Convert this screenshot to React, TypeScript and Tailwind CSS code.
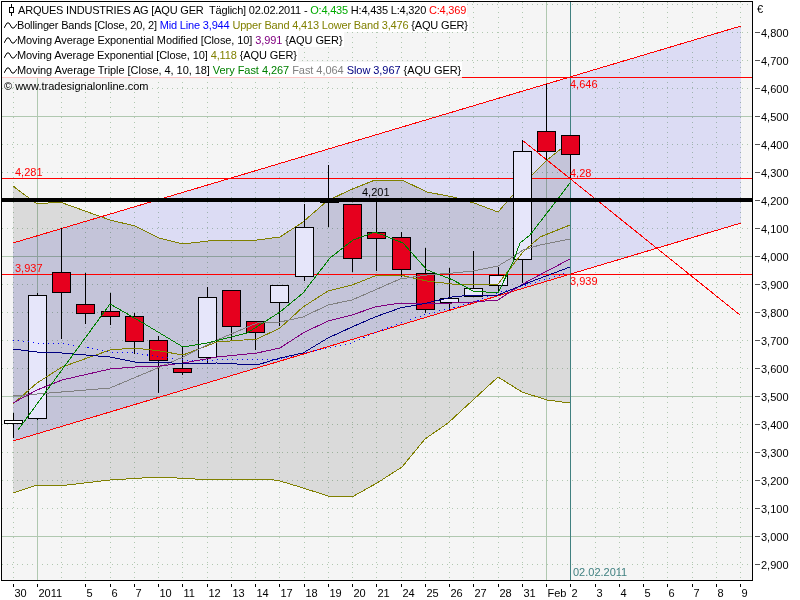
const px = (i: number) => Math.floor(13 + 24.25 * i) + 0.5
const py = (p: number) => Math.floor(32 + (4800 - p) * 0.28) + 0.5

// index, body top, body bottom, wick top, wick bottom, fall
const candles: [number, number, number, number, number, boolean][] = [
  [1, 295, 418, 293, 420, false],
  [2, 272, 292, 228, 339, true],
  [3, 304, 313, 273, 324, true],
  [4, 311, 316, 293, 325, true],
  [5, 316, 341, 313, 354, true],
  [6, 340, 360, 336, 393, true],
  [7, 368, 372, 347, 375, true],
  [8, 297, 357, 287, 363, false],
  [9, 290, 326, 290, 340, true],
  [10, 321, 332, 321, 350, true],
  [11, 285, 302, 285, 326, false],
  [12, 227, 276, 204, 281, false],
  [14, 204, 258, 204, 272, true],
  [15, 232, 238, 202, 271, true],
  [16, 237, 269, 232, 277, true],
  [17, 273, 309, 248, 313, true],
  [18, 298, 302, 268, 310, false],
  [19, 288, 296, 251, 296, false],
  [20, 275, 285, 267, 292, false],
  [21, 151, 259, 140, 283, false],
  [22, 131, 151, 84, 160, true],
  [23, 135, 154, 135, 178, true],
]

const upperBand = '13,186 37,204 60,202 85,211 110,220 135,226 159,238 183,244 217,240 257,240 280,237 303,222 327,201 350,190 375,180 402,180 427,192 453,197 474,203 498,212 513,195 532,175 547,160 562,148 570,143'
const lowerBand = '570,403 547,400 522,392 498,377 473,400 448,423 425,439 402,467 377,483 352,497 328,496 300,487 280,481 267,479 195,479 158,477 110,480 67,485 37,485 13,493'

const maLines = [
  { color: '#808000', points: '13,404 37,383 62,367 110,350 135,348 160,351 183,355 217,342 257,339 280,328 303,307 328,291 352,285 375,276 400,275 427,281 452,284 473,285 498,284 523,252 540,237 570,225' },
  { color: '#808080', points: '13,396 110,388 160,367 183,357 217,340 257,323 280,322 303,317 328,305 352,300 375,290 400,279 427,275 453,273 473,271 498,266 513,257 523,250 540,245 570,239' },
  { color: '#800080', points: '13,403 37,390 62,380 110,369 135,367 160,366 183,363 217,357 257,353 280,348 303,333 328,321 352,315 375,307 400,303 427,304 452,303 473,302 498,300 513,290 530,280 570,259' },
  { color: '#000080', points: '13,349 37,352 62,353 110,357 135,362 160,362 183,364 217,363 257,365 280,358 303,353 328,338 352,327 375,317 400,308 427,303 452,297 473,295 498,295 530,282 570,267' },
  { color: '#008000', points: '18,430 110,304 143,323 183,347 207,343 247,333 280,312 303,293 330,258 353,240 375,232 403,243 427,270 453,280 473,291 498,293 513,262 520,243 530,235 557,200 570,183' },
]

const dayLabels: [number, string][] = [
  [0, '30'], [1, '2011'], [3, '5'], [4, '6'], [5, '7'], [6, '10'], [7, '11'], [8, '12'], [9, '13'], [10, '14'],
  [11, '17'], [12, '18'], [13, '19'], [14, '20'], [15, '21'], [16, '24'], [17, '25'], [18, '26'], [19, '27'],
  [20, '28'], [21, '31'], [22, 'Feb'], [23, '2'], [24, '3'], [25, '4'], [26, '5'], [27, '6'], [28, '7'], [29, '8'], [30, '9'],
]

const priceLevels = Array.from({ length: 20 }, (_, i) => 4800 - i * 100)
const solidLevels = [4500, 4000, 3500, 3000]
const priceLabel = (p: number) => `${Math.floor(p / 1000)},${String(p % 1000).padStart(3, '0')}`

function WaveIcon() {
  return (
    <svg width="13" height="10" viewBox="0 0 13 10" fill="none" className="shrink-0">
      <path d="M0 8L3 3H5L8 8H10L13 4" stroke="#000" strokeWidth="1" />
    </svg>
  )
}

function Chart() {
  return (
    <svg width="800" height="600" viewBox="0 0 800 600" className="block" fontFamily="'Liberation Sans', sans-serif" fontSize="11">
      <rect x="1.5" y="1.5" width="751" height="579" fill="#f5f5f5" />

      {/* Raster */}
      <g shapeRendering="crispEdges" fill="none" stroke="#b0c8b0">
        <line x1="2" x2="752" y1="4.5" y2="4.5" strokeDasharray="1 4" />
        {priceLevels.map(p =>
          solidLevels.includes(p) ? (
            <line key={p} x1="2" x2="752" y1={py(p)} y2={py(p)} />
          ) : (
            <line key={p} x1="2" x2="752" y1={py(p)} y2={py(p)} strokeDasharray="1 4" />
          )
        )}
        {Array.from({ length: 31 }, (_, i) => i).map(i =>
          i === 1 || i === 22 ? (
            <line key={i} x1={px(i)} x2={px(i)} y1="2" y2="580" />
          ) : (
            <line key={i} x1={px(i)} x2={px(i)} y1="2" y2="580" strokeDasharray="1 4" />
          )
        )}
      </g>

      {/* Flaechen */}
      <polygon points={`${upperBand} ${lowerBand}`} fill="#e3e3e3" className="mix-blend-multiply" />
      <polygon points="13,243 741,26 741,223 13,441" fill="#e5e5fe" className="mix-blend-multiply" />

      {/* Zeitlinie */}
      <line x1="570.5" x2="570.5" y1="2" y2="580" stroke="#408080" shapeRendering="crispEdges" />
      <text x="573" y="576" fill="#408080">02.02.2011</text>

      <g fill="none" shapeRendering="crispEdges">
        <polyline points={upperBand} stroke="#808000" />
        <polyline points={lowerBand} stroke="#808000" />
        <line x1="13" y1="243" x2="741" y2="26" stroke="#ff0000" />
        <line x1="13" y1="441" x2="741" y2="223" stroke="#ff0000" />
        <line x1="522" y1="140" x2="740" y2="315" stroke="#ff0000" />
        <line x1="2" x2="752" y1="77.5" y2="77.5" stroke="#ff0000" />
        <line x1="2" x2="752" y1="178.5" y2="178.5" stroke="#ff0000" />
        <line x1="2" x2="752" y1="274.5" y2="274.5" stroke="#ff0000" />
      </g>

      {/* Kerzen */}
      <g shapeRendering="crispEdges" stroke="#000">
        <line x1={px(0)} x2={px(0)} y1="413" y2="438" />
        <rect x="4.5" y="420.5" width="18" height="3" fill="#fff" />
        <line x1={px(13)} x2={px(13)} y1="165" y2="227" />
        <line x1={px(13) - 9} x2={px(13) + 10} y1="202.5" y2="202.5" />
        {candles.map(([i, top, bottom, wickTop, wickBottom, fall]) => (
          <g key={i}>
            <line x1={px(i)} x2={px(i)} y1={wickTop} y2={wickBottom} />
            <rect
              x={px(i) - 9}
              y={top + 0.5}
              width="18"
              height={bottom - top}
              fill={fall ? '#e6001e' : '#e6e6fa'}
            />
          </g>
        ))}
      </g>

      <g fill="none" shapeRendering="crispEdges">
        <polyline
          points="13,340 37,343 67,344 110,352 135,353 160,357 183,360 217,360 280,359 303,353 328,348 352,343 375,333 400,323 427,314 452,308 473,302 498,293 567,273"
          stroke="#0000ff"
          strokeDasharray="1 4"
        />
        {maLines.map(l => (
          <polyline key={l.color} points={l.points} stroke={l.color} />
        ))}
      </g>

      <rect x="2" y="198" width="750" height="4" fill="#000" />

      <g fill="#ff0000">
        <text x="15" y="176">4,281</text>
        <text x="15" y="272">3,937</text>
        <text x="570" y="88">4,646</text>
        <text x="570" y="177">4,28</text>
        <text x="570" y="285">3,939</text>
      </g>
      <text x="362" y="196" fill="#000">4,201</text>

      <rect x="1.5" y="1.5" width="751" height="579" fill="none" stroke="#000" shapeRendering="crispEdges" />

      {/* Achsen */}
      <text x="757" y="13" fill="#000">€</text>
      {priceLevels.map(p => (
        <g key={p}>
          <line x1="755" x2="760" y1={py(p)} y2={py(p)} stroke="#555" shapeRendering="crispEdges" />
          <text x="761" y={py(p) + 4} fill="#000">{priceLabel(p)}</text>
        </g>
      ))}
      {dayLabels.map(([i, label]) => (
        <g key={i}>
          <line x1={px(i)} x2={px(i)} y1="584" y2="587" stroke="#000" shapeRendering="crispEdges" />
          <text x={px(i) + 1} y="597" fill="#000">{label}</text>
        </g>
      ))}
    </svg>
  )
}

export default function App() {
  return (
    <div className="relative w-[800px] h-[600px] bg-white overflow-hidden">
      <Chart />
      <div className="absolute left-[2px] top-[2px] flex flex-col items-start font-['Liberation_Sans',sans-serif] text-[11px] leading-[15px] text-black whitespace-pre">
        <div className="flex items-center h-[15px] pt-px bg-white pl-[5px] pr-px tracking-[-0.2px]">
          <svg width="9" height="12" viewBox="0 0 9 12" fill="none" className="shrink-0 mr-[2px]">
            <path d="M4.5 0V12" stroke="#000" />
            <rect x="2.5" y="3.5" width="4" height="5" fill="#fff" stroke="#000" />
          </svg>
          <span>ARQUES INDUSTRIES AG [AQU GER  Täglich] 02.02.2011 - </span>
          <span className="text-[#00aa00]">O:4,435</span>
          <span> H:4,435 L:4,320 </span>
          <span className="text-[#ff0000]">C:4,369</span>
        </div>
        <div className="flex items-center h-[15px] pt-px bg-white pl-[2px] pr-px tracking-[-0.17px]">
          <WaveIcon />
          <span>Bollinger Bands [Close, 20, 2] </span>
          <span className="text-[#0000ff]">Mid Line 3,944</span>
          <span className="text-[#808000]"> Upper Band 4,413 Lower Band 3,476</span>
          <span> {'{AQU GER}'}</span>
        </div>
        <div className="flex items-center h-[15px] pt-px bg-white pl-[2px] pr-px tracking-[-0.09px]">
          <WaveIcon />
          <span>Moving Average Exponential Modified [Close, 10] </span>
          <span className="text-[#800080]">3,991</span>
          <span> {'{AQU GER}'}</span>
        </div>
        <div className="flex items-center h-[15px] pt-px bg-white pl-[2px] pr-px tracking-[-0.11px]">
          <WaveIcon />
          <span>Moving Average Exponential [Close, 10] </span>
          <span className="text-[#808000]">4,118</span>
          <span> {'{AQU GER}'}</span>
        </div>
        <div className="flex items-center h-[15px] pt-px bg-white pl-[2px] pr-px tracking-[-0.05px]">
          <WaveIcon />
          <span>Moving Average Triple [Close, 4, 10, 18] </span>
          <span className="text-[#008000]">Very Fast 4,267</span>
          <span className="text-[#808080]"> Fast 4,064</span>
          <span className="text-[#000080]"> Slow 3,967</span>
          <span> {'{AQU GER}'}</span>
        </div>
        <div className="h-px w-[460px] bg-[#ffc8c8]" />
        <div className="flex items-center h-[15px] pl-[2px] pt-px">© www.tradesignalonline.com</div>
      </div>
    </div>
  )
}
